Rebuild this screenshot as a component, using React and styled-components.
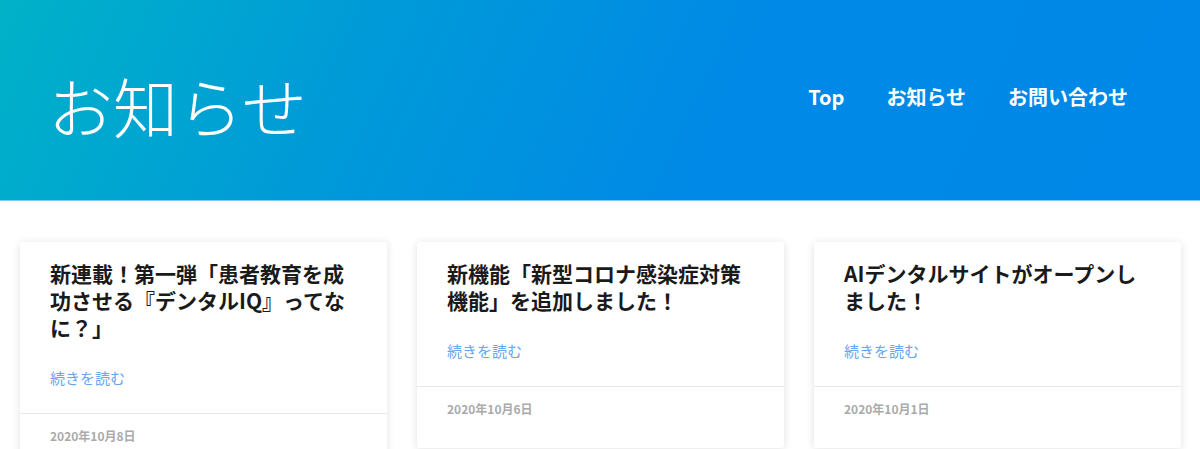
import React from 'react'
import styled, { createGlobalStyle } from 'styled-components'

const GlobalStyle = createGlobalStyle`
  body {
    margin: 0;
    background: #fff;
    font-family: 'Noto Sans CJK JP', 'Noto Sans', sans-serif;
    color: #222;
  }
`

const posts = [
  { title: '新連載！第一弾「患者教育を成功させる『デンタルIQ』ってなに？」', date: '2020年10月8日' },
  { title: '新機能「新型コロナ感染症対策機能」を追加しました！', date: '2020年10月6日' },
  { title: 'AIデンタルサイトがオープンしました！', date: '2020年10月1日' },
]

export default function App() {
  return (
    <>
      <GlobalStyle />
      <Header>
        <PageTitle>お知らせ</PageTitle>
        <Nav>
          <NavLink>Top</NavLink>
          <NavLink>お知らせ</NavLink>
          <NavLink>お問い合わせ</NavLink>
        </Nav>
      </Header>
      <Grid>
        {posts.map(p => (
          <Card key={p.date}>
            <Body>
              <Title>{p.title}</Title>
              <More>続きを読む</More>
            </Body>
            <Footer>{p.date}</Footer>
          </Card>
        ))}
      </Grid>
    </>
  )
}

const Header = styled.header`
  display: flex;
  align-items: center;
  justify-content: space-between;
  height: 201px;
  padding: 0 72px 0 48px;
  background: linear-gradient(115deg, #00b2c8 0%, #009ad8 30%, #0089e6 60%, #0088e8 100%);
  border-bottom: 1px solid #7fcdf2;
  box-sizing: border-box;
`

const PageTitle = styled.h1`
  margin: 10px 0 0;
  color: #fff;
  font-size: 65px;
  font-weight: 300;
`

const Nav = styled.nav`
  display: flex;
  gap: 42px;
  margin-bottom: 8px;
`

const NavLink = styled.a`
  color: #fff;
  font-size: 20px;
  font-weight: 700;
  cursor: pointer;
`

const Grid = styled.main`
  display: grid;
  grid-template-columns: repeat(3, 367px);
  gap: 30px;
  padding: 41px 20px 0;
`

const Card = styled.article`
  background: #fff;
  border-radius: 3px;
  box-shadow: 0 1px 8px rgba(0, 0, 0, 0.12);
  align-self: start;
`

const Body = styled.div`
  padding: 18px 30px 24px;
  border-bottom: 1px solid #e8e8e8;
`

const Title = styled.h2`
  margin: 0 0 26px;
  font-size: 21px;
  line-height: 27px;
  font-weight: 700;
  color: #1a1a1a;
`

const More = styled.a`
  display: block;
  font-size: 15px;
  line-height: 22px;
  color: #64a6f0;
  cursor: pointer;
`

const Footer = styled.div`
  padding: 13px 30px 30px;
  font-size: 12px;
  line-height: 18px;
  font-weight: 700;
  color: #aaa;
`
